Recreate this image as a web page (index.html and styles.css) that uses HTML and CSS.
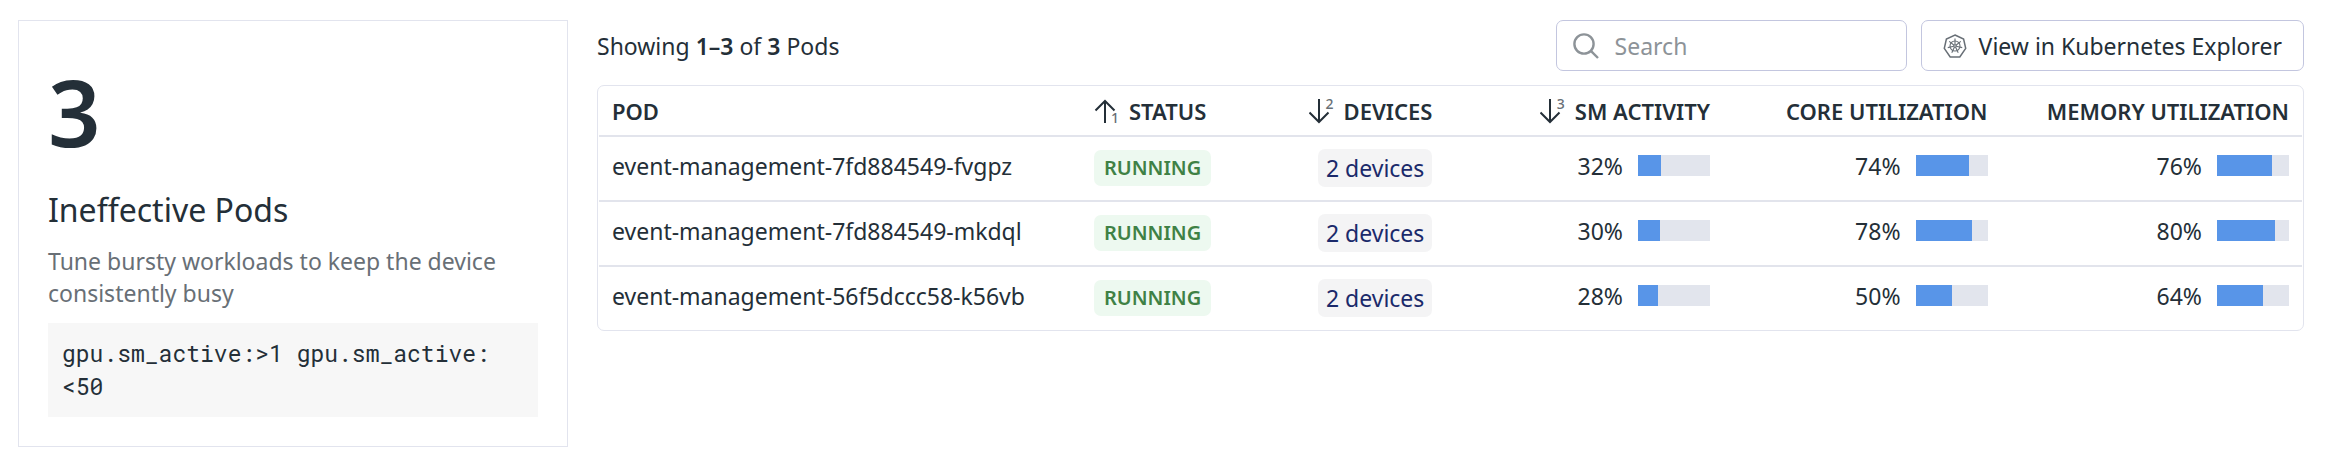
FILE: index.html
```
<!DOCTYPE html>
<html lang="en">
<head>
<meta charset="utf-8">
<title>Ineffective Pods</title>
<link rel="stylesheet" href="styles.css">
</head>
<body>
<main class="panel">
  <section class="summary">
    <div class="summary-count">3</div>
    <h2 class="summary-title">Ineffective Pods</h2>
    <p class="summary-text">Tune bursty workloads to keep the device consistently busy</p>
    <code class="summary-query">gpu.sm_active:&gt;1 gpu.sm_active:<wbr>&lt;50</code>
  </section>
  <section class="list">
    <div class="toolbar">
      <p class="showing">Showing <strong>1–3</strong> of <strong>3</strong> Pods</p>
      <label class="search">
        <svg class="search-icon" viewBox="0 0 26 26" aria-hidden="true"><circle cx="11" cy="11" r="9.6"/><path d="M17.6 17.6 25 25"/></svg>
        <input class="search-input" type="search" placeholder="Search" aria-label="Search">
      </label>
      <button class="explorer" type="button">
        <svg class="k8s-icon" viewBox="0 0 24 24" aria-hidden="true">
          <path class="k8s-frame" d="M12 1 20.6 5.1 22.7 14.4 16.8 22.9H7.2L1.3 14.4 3.4 5.1Z"/>
          <circle cx="12" cy="12" r="5"/>
          <circle cx="12" cy="12" r="1.2"/>
          <path d="M12 10.800V4.600M12.940 11.250 17.790 7.390M13.170 12.270 19.210 13.650M12.520 13.080 15.210 18.670M11.480 13.080 8.790 18.670M10.830 12.270 4.790 13.650M11.060 11.250 6.210 7.390"/>
        </svg>
        View in Kubernetes Explorer
      </button>
    </div>
    <div class="table-frame">
      <table class="pods">
        <colgroup><col class="col-pod"><col class="col-status"><col class="col-devices"><col class="col-sm"><col class="col-core"><col class="col-memory"></colgroup>
        <thead>
          <tr>
            <th scope="col">POD</th>
            <th scope="col"><span class="sort"><svg class="sort-icon" viewBox="0 0 24 26" aria-hidden="true"><path d="M11 24V2M1.500 11.500 11 2 20.500 11.500"/></svg><span class="rank rank-low">1</span></span>STATUS</th>
            <th scope="col" class="num"><span class="sort"><svg class="sort-icon" viewBox="0 0 24 26" aria-hidden="true"><path d="M10 0V23M.5 13.500 10 23 19.500 13.500"/></svg><span class="rank">2</span></span>DEVICES</th>
            <th scope="col" class="num"><span class="sort"><svg class="sort-icon" viewBox="0 0 24 26" aria-hidden="true"><path d="M10 0V23M.5 13.500 10 23 19.500 13.500"/></svg><span class="rank">3</span></span>SM ACTIVITY</th>
            <th scope="col" class="num">CORE UTILIZATION</th>
            <th scope="col" class="num">MEMORY UTILIZATION</th>
          </tr>
        </thead>
        <tbody>
          <tr>
            <td class="raised">event-management-7fd884549-fvgpz</td>
            <td><span class="badge">RUNNING</span></td>
            <td class="num"><a class="devices" href="#">2 devices</a></td>
            <td class="raised"><div class="meter">32%<span class="bar"><span class="fill" style="width:32%"></span></span></div></td>
            <td class="raised"><div class="meter">74%<span class="bar"><span class="fill" style="width:74%"></span></span></div></td>
            <td class="raised"><div class="meter">76%<span class="bar"><span class="fill" style="width:76%"></span></span></div></td>
          </tr>
          <tr>
            <td class="raised">event-management-7fd884549-mkdql</td>
            <td><span class="badge">RUNNING</span></td>
            <td class="num"><a class="devices" href="#">2 devices</a></td>
            <td class="raised"><div class="meter">30%<span class="bar"><span class="fill" style="width:30%"></span></span></div></td>
            <td class="raised"><div class="meter">78%<span class="bar"><span class="fill" style="width:78%"></span></span></div></td>
            <td class="raised"><div class="meter">80%<span class="bar"><span class="fill" style="width:80%"></span></span></div></td>
          </tr>
          <tr>
            <td class="raised">event-management-56f5dccc58-k56vb</td>
            <td><span class="badge">RUNNING</span></td>
            <td class="num"><a class="devices" href="#">2 devices</a></td>
            <td class="raised"><div class="meter">28%<span class="bar"><span class="fill" style="width:28%"></span></span></div></td>
            <td class="raised"><div class="meter">50%<span class="bar"><span class="fill" style="width:50%"></span></span></div></td>
            <td class="raised"><div class="meter">64%<span class="bar"><span class="fill" style="width:64%"></span></span></div></td>
          </tr>
        </tbody>
      </table>
    </div>
  </section>
</main>
</body>
</html>
```

FILE: styles.css
```
* {
  box-sizing: border-box;
}

body {
  margin: 0;
  background: #fff;
  color: #242f38;
  font: 23px/32px "Noto Sans", sans-serif;
}

.panel {
  display: flex;
  align-items: flex-start;
  gap: 29px;
  padding: 20px 24px 26px 18px;
}

.summary {
  flex: none;
  width: 550px;
  padding: 29px;
  border: 1px solid #e2e4ee;
}

.summary-count {
  margin-top: 12px;
  font-size: 92px;
  font-weight: 600;
  line-height: 100px;
}

.summary-title {
  margin: 26px 0 13px;
  font-size: 32px;
  font-weight: 400;
  line-height: 44px;
}

.summary-text {
  margin: 0 0 14px;
  color: #686f76;
}

.summary-query {
  display: block;
  padding: 14px;
  background: #f7f7f7;
  font: 23px/33px "Roboto Mono", "Liberation Mono", monospace;
}

.list {
  flex: 1;
  min-width: 0;
}

.toolbar {
  display: flex;
  align-items: stretch;
  gap: 14px;
  margin-bottom: 14px;
}

.showing {
  flex: 1;
  margin: 0;
  align-self: center;
}

.showing strong {
  font-weight: 600;
}

.search,
.explorer {
  display: flex;
  align-items: center;
  height: 51px;
  border: 1px solid #c3c6df;
  border-radius: 7px;
  background: #fff;
}

.search {
  width: 351px;
  gap: 16px;
  padding: 0 16px;
}

.search-icon {
  flex: none;
  width: 26px;
  height: 26px;
  fill: none;
  stroke: #8d9398;
  stroke-width: 2.4;
}

.search-input {
  flex: 1;
  min-width: 0;
  padding: 0;
  border: 0;
  outline: 0;
  background: none;
  color: inherit;
  font: inherit;
}

.search-input::placeholder {
  color: #8d9398;
}

.explorer {
  gap: 12px;
  padding: 0 21px;
  color: inherit;
  font: inherit;
}

.k8s-icon {
  width: 24px;
  height: 24px;
  fill: none;
  stroke: #686f76;
  stroke-width: 1.1;
}

.k8s-frame {
  stroke-width: 1.5;
}

.table-frame {
  padding: 0 1px;
  border: 1px solid #e2e4ee;
  border-radius: 7px;
}

.pods {
  width: 100%;
  table-layout: fixed;
  border-collapse: separate;
  border-spacing: 0;
}

.col-pod {
  width: 28.3%;
}

.col-status {
  width: 9.4%;
}

.col-devices {
  width: 12%;
}

.col-sm,
.col-core {
  width: 16.3%;
}

.pods th,
.pods td {
  padding: 0 13px;
  border-bottom: 2px solid #e2e4ec;
  text-align: left;
  white-space: nowrap;
}

.pods th {
  height: 51px;
  font-size: 22px;
  font-weight: 600;
}

.pods td {
  height: 65px;
  padding-bottom: 2px;
}

.pods tbody tr:last-child td {
  height: 63px;
  border-bottom: 0;
}

.pods .num {
  text-align: right;
}

.pods .raised {
  padding-bottom: 6px;
}

.sort {
  position: relative;
  display: inline-block;
  width: 25px;
  height: 26px;
  margin-right: 10px;
  vertical-align: -5px;
}

.sort-icon {
  display: block;
  width: 24px;
  height: 26px;
  fill: none;
  stroke: #242f38;
  stroke-width: 2;
}

.rank {
  position: absolute;
  top: 0;
  right: 0;
  color: #686f76;
  font-size: 14px;
  font-weight: 500;
  line-height: 10px;
}

.rank-low {
  top: auto;
  bottom: 2px;
}

.badge,
.devices {
  display: inline-block;
  border-radius: 7px;
  vertical-align: middle;
}

.badge {
  padding: 0 10px;
  background: #edf9f0;
  color: #3f8145;
  font-size: 20px;
  font-weight: 600;
  line-height: 36px;
}

.devices {
  padding: 0 8px;
  background: #f4f4f5;
  color: #1b2a6b;
  line-height: 38px;
  text-decoration: none;
}

.meter {
  display: flex;
  align-items: center;
  justify-content: flex-end;
  gap: 15px;
}

.bar {
  width: 72px;
  height: 21px;
  background: #e2e5ed;
}

.fill {
  display: block;
  height: 100%;
  background: #5895e8;
}
```
